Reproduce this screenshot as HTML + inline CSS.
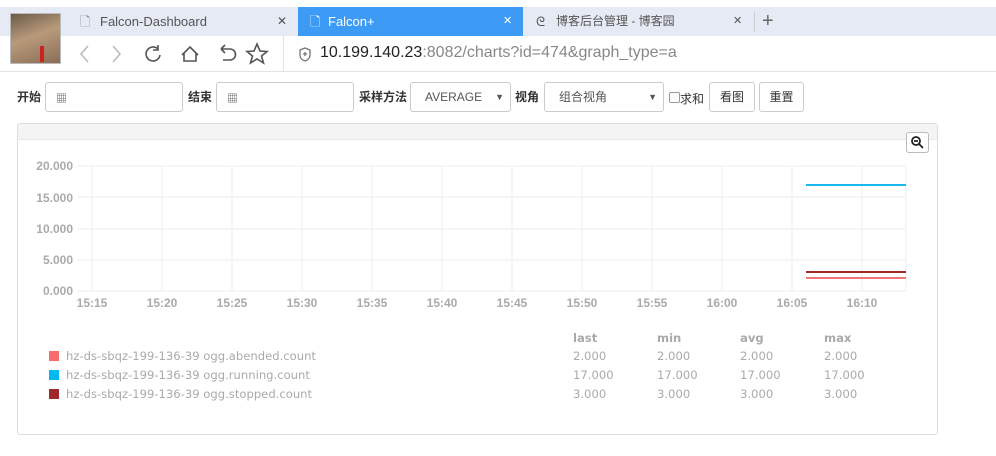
<!DOCTYPE html>
<html><head><meta charset="utf-8"><style>
*{margin:0;padding:0;box-sizing:border-box}
body{width:996px;height:456px;background:#fff;position:relative;overflow:hidden;font-family:"Liberation Sans","Noto Sans CJK SC",sans-serif}
.a{position:absolute}
.tabbar{left:0;top:7px;width:996px;height:29px;background:#e5eaf4}
.tab{top:7px;height:29px;font-size:13px;color:#333;line-height:29px}
.inp{border:1px solid #ccc;border-radius:3px;height:30px;top:82px;background:#fff}
.lbl{top:82px;line-height:30px;font-size:12px;font-weight:bold;color:#333}
.btn{border:1px solid #ccc;border-radius:3px;height:30px;top:82px;font-size:12px;line-height:28px;text-align:center;color:#333;background:#fff}
.yl{font-size:12px;font-weight:bold;color:#aaa;text-align:right;width:60px;left:13px}
.xl{font-size:12px;font-weight:bold;color:#aaa;top:296px;width:50px;text-align:center}
.lg{font-size:11.6px;color:#aaa;left:66px;font-family:"DejaVu Sans",sans-serif}
.sq{width:10px;height:10px;left:49px}
.st{font-size:11.6px;color:#aaa;font-family:"DejaVu Sans",sans-serif}
</style></head><body>
<div class="a" style="left:0;top:0;width:996px;height:7px;background:#fff"></div>
<div class="a tabbar"></div>
<div class="a" style="left:298px;top:7px;width:225px;height:29px;background:#3d9bf6"></div>
<div class="a" style="left:10px;top:13px;width:51px;height:51px;background:linear-gradient(160deg,#6b5a4a,#b89a7a 45%,#8a6e58);border:1px solid #bbb"></div>
<div class="a" style="left:40px;top:46px;width:4px;height:16px;background:#c22"></div>
<div class="a tab" style="left:80px"><span style="color:#888">🗋</span></div>
<div class="a tab" style="left:100px;color:#555">Falcon-Dashboard</div>
<div class="a tab" style="left:277px;color:#555;font-size:12px">✕</div>
<div class="a tab" style="left:310px;color:#fff">🗋</div>
<div class="a tab" style="left:328px;color:#fff">Falcon+</div>
<div class="a tab" style="left:503px;color:#fff;font-size:11px">✕</div>
<div class="a tab" style="left:536px;color:#555">ᘓ</div>
<div class="a tab" style="left:556px;color:#555;font-size:12px">博客后台管理 - 博客园</div>
<div class="a tab" style="left:733px;color:#555;font-size:11px">✕</div>
<div class="a" style="left:754px;top:12px;width:1px;height:20px;background:#ccc"></div>
<div class="a tab" style="left:762px;color:#666;font-size:20px">+</div>
<div class="a" style="left:0;top:71px;width:996px;height:1px;background:#e4e4e4"></div>
<div class="a" style="left:283px;top:36px;width:1px;height:35px;background:#e4e4e4"></div>
<svg class="a" style="left:70px;top:40px" width="210" height="28" fill="none" stroke="#555" stroke-width="1.6">
<path d="M18 6l-7 8 7 8" stroke="#bbb"/><path d="M43 6l7 8-7 8" stroke="#bbb"/>
<path d="M88 9a7 7 0 1 0 2 6M88 5v5h-5"/>
<path d="M112 15l8-8 8 8M114 13v8h12v-8"/>
<path d="M151 9h9a5 5 0 0 1 0 11h-7M151 9l4-4M151 9l4 4"/>
<path d="M187 4l3 7 7 .5-5.5 4.5 2 7-6.5-4-6.5 4 2-7-5.5-4.5 7-.5z"/>
</svg>
<svg class="a" style="left:298px;top:47px" width="14" height="16" fill="none" stroke="#777" stroke-width="1.3"><path d="M7 1l5 2v5c0 3-2 5-5 6-3-1-5-3-5-6V3z"/><path d="M7 5v4M5 7h4"/></svg>
<div class="a" style="left:320px;top:44px;font-size:16px;color:#222">10.199.140.23<span style="color:#888">:8082/charts?id=474&amp;graph_type=a</span></div>

<div class="a lbl" style="left:17px">开始</div>
<div class="a inp" style="left:45px;width:138px"><span style="position:absolute;left:10px;top:7px;font-size:11px;color:#555">▦</span></div>
<div class="a lbl" style="left:188px">结束</div>
<div class="a inp" style="left:216px;width:138px"><span style="position:absolute;left:10px;top:7px;font-size:11px;color:#555">▦</span></div>
<div class="a lbl" style="left:359px">采样方法</div>
<div class="a inp" style="left:410px;width:101px;font-size:12px;color:#555;line-height:28px;padding-left:14px">AVERAGE<span style="position:absolute;right:6px;font-size:9px">▼</span></div>
<div class="a lbl" style="left:515px">视角</div>
<div class="a inp" style="left:544px;width:120px;font-size:12px;color:#555;line-height:28px;padding-left:14px">组合视角<span style="position:absolute;right:6px;font-size:9px">▼</span></div>
<div class="a" style="left:669px;top:92px;width:11px;height:11px;border:1px solid #999;border-radius:2px"></div>
<div class="a" style="left:680px;top:90px;font-size:12px;color:#333">求和</div>
<div class="a btn" style="left:709px;width:46px">看图</div>
<div class="a btn" style="left:759px;width:45px">重置</div>

<div class="a" style="left:17px;top:123px;width:921px;height:312px;border:1px solid #ddd;border-radius:3px"></div>
<div class="a" style="left:18px;top:124px;width:919px;height:16px;background:#f4f4f4;border-bottom:1px solid #e8e8e8"></div>
<div class="a" style="left:906px;top:132px;width:23px;height:21px;border:1px solid #bbb;border-radius:3px;background:#fff"></div>
<svg class="a" style="left:910px;top:135px" width="15" height="15" fill="none" stroke="#222" stroke-width="1.8"><circle cx="6" cy="6" r="4"/><path d="M9 9l4 4M4 6h4"/></svg>

<svg class="a" style="left:0;top:0" width="996" height="456">
<g stroke="#ececec" stroke-width="1">
<path d="M77 166H906M77 197H906M77 229H906M77 260H906M77 291H906"/>
<path d="M92 166V291M162 166V291M232 166V291M302 166V291M372 166V291M442 166V291M512 166V291M582 166V291M652 166V291M722 166V291M792 166V291M862 166V291M906 166V291"/>
</g>
<path d="M806 185H906" stroke="#16b8ee" stroke-width="2"/>
<path d="M806 272H906" stroke="#a12a2a" stroke-width="2"/>
<path d="M806 278H906" stroke="#f27777" stroke-width="2"/>
</svg>
<div class="a yl" style="top:159px">20.000</div>
<div class="a yl" style="top:191px">15.000</div>
<div class="a yl" style="top:222px">10.000</div>
<div class="a yl" style="top:253px">5.000</div>
<div class="a yl" style="top:284px">0.000</div>
<div class="a xl" style="left:67px">15:15</div>
<div class="a xl" style="left:137px">15:20</div>
<div class="a xl" style="left:207px">15:25</div>
<div class="a xl" style="left:277px">15:30</div>
<div class="a xl" style="left:347px">15:35</div>
<div class="a xl" style="left:417px">15:40</div>
<div class="a xl" style="left:487px">15:45</div>
<div class="a xl" style="left:557px">15:50</div>
<div class="a xl" style="left:627px">15:55</div>
<div class="a xl" style="left:697px">16:00</div>
<div class="a xl" style="left:767px">16:05</div>
<div class="a xl" style="left:837px">16:10</div>

<div class="a sq" style="top:351px;background:#f76b6b"></div>
<div class="a sq" style="top:370px;background:#00b8f2"></div>
<div class="a sq" style="top:389px;background:#a12828"></div>
<div class="a lg" style="top:349px">hz-ds-sbqz-199-136-39 ogg.abended.count</div>
<div class="a lg" style="top:368px">hz-ds-sbqz-199-136-39 ogg.running.count</div>
<div class="a lg" style="top:387px">hz-ds-sbqz-199-136-39 ogg.stopped.count</div>
<div class="a st" style="left:573px;top:331px;font-weight:bold">last</div>
<div class="a st" style="left:657px;top:331px;font-weight:bold">min</div>
<div class="a st" style="left:740px;top:331px;font-weight:bold">avg</div>
<div class="a st" style="left:824px;top:331px;font-weight:bold">max</div>
<div class="a st" style="left:573px;top:349px">2.000</div><div class="a st" style="left:657px;top:349px">2.000</div><div class="a st" style="left:740px;top:349px">2.000</div><div class="a st" style="left:824px;top:349px">2.000</div>
<div class="a st" style="left:573px;top:368px">17.000</div><div class="a st" style="left:657px;top:368px">17.000</div><div class="a st" style="left:740px;top:368px">17.000</div><div class="a st" style="left:824px;top:368px">17.000</div>
<div class="a st" style="left:573px;top:387px">3.000</div><div class="a st" style="left:657px;top:387px">3.000</div><div class="a st" style="left:740px;top:387px">3.000</div><div class="a st" style="left:824px;top:387px">3.000</div>
</body></html>
